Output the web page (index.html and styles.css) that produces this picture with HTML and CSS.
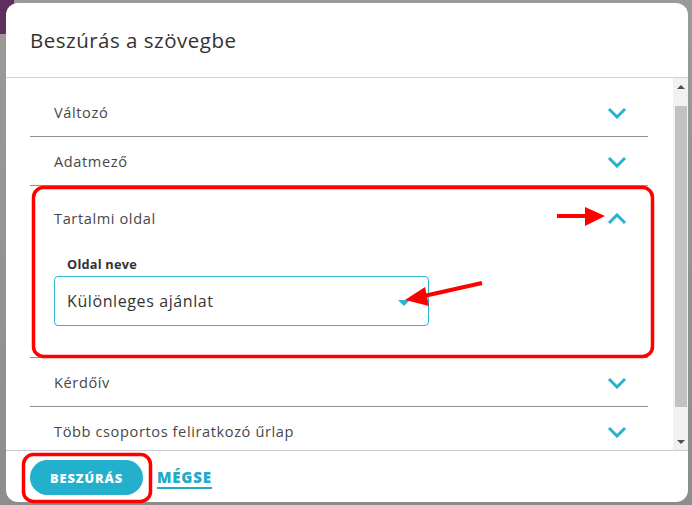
FILE: index.html
```html
<!DOCTYPE html>
<html lang="hu">
<head>
<meta charset="utf-8">
<title>Beszúrás a szövegbe</title>
<link rel="stylesheet" href="styles.css">
</head>
<body>
<div class="backdrop">
  <div class="bg-purple"></div>
  <div class="dialog">
    <div class="dlg-header">
      <h1 class="dlg-title">Beszúrás a szövegbe</h1>
    </div>
    <div class="dlg-content">
      <div class="viewport">
        <div class="panel">
          <div class="panel-head">
            <span class="panel-title">Változó</span>
            <svg class="chev" width="20" height="12" viewBox="0 0 20 12"><polyline points="2,2 10,10 18,2"/></svg>
          </div>
        </div>
        <div class="panel">
          <div class="panel-head">
            <span class="panel-title">Adatmező</span>
            <svg class="chev" width="20" height="12" viewBox="0 0 20 12"><polyline points="2,2 10,10 18,2"/></svg>
          </div>
        </div>
        <div class="panel panel-open">
          <div class="panel-head panel-head-open">
            <span class="panel-title">Tartalmi oldal</span>
            <svg class="chev" width="20" height="12" viewBox="0 0 20 12"><polyline points="2,10 10,2 18,10"/></svg>
          </div>
          <div class="panel-body">
            <div class="field-label">Oldal neve</div>
            <div class="select">
              <span class="select-value">Különleges ajánlat</span>
              <span class="select-arrow"></span>
            </div>
          </div>
        </div>
        <div class="panel">
          <div class="panel-head">
            <span class="panel-title">Kérdőív</span>
            <svg class="chev" width="20" height="12" viewBox="0 0 20 12"><polyline points="2,2 10,10 18,2"/></svg>
          </div>
        </div>
        <div class="panel">
          <div class="panel-head">
            <span class="panel-title">Több csoportos feliratkozó űrlap</span>
            <svg class="chev" width="20" height="12" viewBox="0 0 20 12"><polyline points="2,2 10,10 18,2"/></svg>
          </div>
        </div>
      </div>
      <div class="scrollbar">
        <div class="sb-btn"><span class="sb-up"></span></div>
        <div class="sb-track">
          <div class="sb-thumb"></div>
        </div>
        <div class="sb-btn"><span class="sb-down"></span></div>
      </div>
    </div>
    <div class="dlg-footer">
      <button class="btn-primary">BESZÚRÁS</button>
      <a class="btn-link">MÉGSE</a>
    </div>
  </div>
  <svg class="annotations" width="692" height="505" viewBox="0 0 692 505">
    <rect x="33.5" y="187.5" width="619" height="169" rx="10" ry="10" fill="none" stroke="#ff0000" stroke-width="3.5"/>
    <rect x="23.5" y="454.5" width="127" height="47" rx="10" ry="10" fill="none" stroke="#ff0000" stroke-width="3.5"/>
    <line x1="557" y1="216" x2="590" y2="216" stroke="#ff0000" stroke-width="4"/>
    <polygon points="585,207 605,216 585,226" fill="#ff0000"/>
    <line x1="482" y1="283" x2="424" y2="296" stroke="#ff0000" stroke-width="4"/>
    <polygon points="405,300 425,287 429,306" fill="#ff0000"/>
  </svg>
</div>
</body>
</html>
```
FILE: styles.css
```css
* { box-sizing: border-box; }
html, body { margin: 0; padding: 0; }
body {
  width: 692px;
  height: 505px;
  overflow: hidden;
  font-family: "Open Sans", "Liberation Sans", sans-serif;
  background: #8f8f8f;
}
.backdrop {
  position: relative;
  width: 692px;
  height: 505px;
  padding: 3px 4px 3px 6px;
  background: linear-gradient(to bottom, #9a9a9a 0, #8d8d8d 100%);
}
.bg-purple {
  position: absolute;
  left: 0;
  top: 0;
  width: 14px;
  height: 34px;
  background: #5e2f5e;
}
.dialog {
  position: relative;
  width: 682px;
  height: 499px;
  background: #ffffff;
  border-radius: 12px;
  display: flex;
  flex-direction: column;
  overflow: hidden;
}
.dlg-header {
  height: 75px;
  border-bottom: 1px solid #d2d2d2;
  padding: 0 24px;
  flex: none;
}
.dlg-title {
  margin: 0;
  padding-top: 23px;
  font-size: 20.5px;
  line-height: 28px;
  font-weight: 400;
  color: #333333;
  letter-spacing: 0.5px;
}
.dlg-content {
  flex: none;
  height: 372px;
  display: flex;
  flex-direction: row;
}
.viewport {
  flex: 1;
  overflow: hidden;
  padding: 10px 25px 0 24px;
}
.panel {
  border-bottom: 1px solid #958e96;
}
.panel-head {
  height: 48px;
  display: flex;
  align-items: center;
  justify-content: space-between;
  padding: 0 21px 0 24px;
}
.panel-head-open {
  height: 64px;
}
.panel-title {
  font-size: 14.6px;
  color: #474747;
  letter-spacing: 0.6px;
}
.chev {
  margin-top: 2px;
}
.chev polyline {
  fill: none;
  stroke: #29b2ce;
  stroke-width: 3;
}
.panel-body {
  padding: 0 24px 31px 24px;
}
.field-label {
  height: 26px;
  padding: 5px 0 0 13px;
  font-size: 12.8px;
  font-weight: 700;
  line-height: 18px;
  color: #333333;
  letter-spacing: 0.2px;
}
.select {
  width: 375px;
  height: 50px;
  border: 1px solid #2bb4d0;
  border-radius: 4px;
  display: flex;
  align-items: center;
  justify-content: space-between;
  padding: 0 18px 0 12px;
}
.select-value {
  font-size: 16px;
  color: #333333;
  letter-spacing: 0.6px;
}
.select-arrow {
  width: 0;
  height: 0;
  border-left: 6px solid transparent;
  border-right: 6px solid transparent;
  border-top: 6px solid #2bb4d0;
  margin-top: 4px;
}
.scrollbar {
  width: 15px;
  flex: none;
  background: #f1f1f1;
  display: flex;
  flex-direction: column;
}
.sb-btn {
  height: 17px;
  display: flex;
  align-items: center;
  justify-content: center;
  flex: none;
}
.sb-up {
  width: 0;
  height: 0;
  border-left: 4px solid transparent;
  border-right: 4px solid transparent;
  border-bottom: 4px solid #505050;
}
.sb-down {
  width: 0;
  height: 0;
  border-left: 4px solid transparent;
  border-right: 4px solid transparent;
  border-top: 4px solid #505050;
}
.sb-track {
  flex: 1;
  padding: 11px 1px 0 2px;
}
.sb-thumb {
  height: 301px;
  background: #c1c1c1;
}
.dlg-footer {
  flex: 1;
  border-top: 1px solid #cfc8cf;
  display: flex;
  align-items: flex-start;
  padding: 9px 24px 0 24px;
}
.btn-primary {
  width: 113px;
  height: 35px;
  border: none;
  border-radius: 18px;
  background: #22b0cc;
  color: #ffffff;
  font-family: "Open Sans", "Liberation Sans", sans-serif;
  font-weight: 800;
  font-size: 12.8px;
  letter-spacing: 0.9px;
  padding: 0;
}
.btn-link {
  margin-left: 14px;
  margin-top: 9px;
  font-weight: 800;
  font-size: 15px;
  line-height: 17px;
  color: #22aac8;
  border-bottom: 2px solid #22aac8;
  padding-bottom: 1px;
  letter-spacing: 0.8px;
}
.annotations {
  position: absolute;
  left: 0;
  top: 0;
  pointer-events: none;
}
```
